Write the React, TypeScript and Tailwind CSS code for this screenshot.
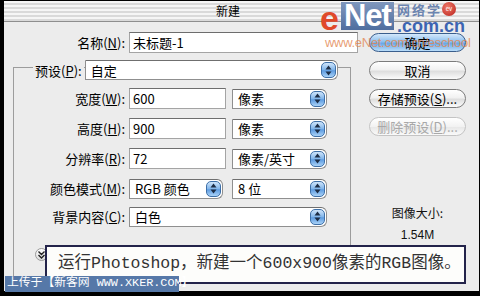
import React from 'react';

const ui = "font-['Noto_Sans_CJK_SC','Liberation_Sans',sans-serif]";

const Arrows = () => (
  <div className="w-[15px] h-[16px] rounded-[5px] border border-[#3d6fa8] bg-[linear-gradient(180deg,#cfe5fb_0%,#7fb4ea_50%,#5d9be0_55%,#a9d2f7_100%)] flex items-center justify-center">
    <svg width="7" height="11" viewBox="0 0 7 11">
      <path d="M3.5 0.5 L6.5 4.5 L0.5 4.5 Z" fill="#1d2d45" />
      <path d="M3.5 10.5 L6.5 6.5 L0.5 6.5 Z" fill="#1d2d45" />
    </svg>
  </div>
);

const Select = ({ value, w }: { value: string; w: string }) => (
  <div className={`${w} h-[20px] bg-white border border-[#8f8f8f] border-t-[#6f6f6f] rounded-r-[6px] flex items-center justify-between pl-[5px] pr-[1px]`}>
    <span className="text-[13px] leading-none text-black">{value}</span>
    <Arrows />
  </div>
);

const Input = ({ value, w }: { value: string; w: string }) => (
  <div className={`${w} h-[21px] bg-white border border-[#a4a4a4] border-t-[#6d6d6d] flex items-center pl-[3px] text-[13px] leading-none text-black`}>
    {value}
  </div>
);

const Label = ({ text, u }: { text: string; u: string }) => (
  <span className="text-[13px] leading-none text-black whitespace-nowrap">
    {text}(<span className="underline">{u}</span>):
  </span>
);

const Button = ({ label, primary, disabled }: { label: React.ReactNode; primary?: boolean; disabled?: boolean }) => (
  <div
    className={
      'w-[97px] h-[19px] rounded-full flex items-center justify-center text-[13px] leading-none border ' +
      (primary
        ? 'border-[#3a5e8c] bg-[linear-gradient(180deg,#d4e8fb_0%,#8ec0ee_45%,#6aa8e6_55%,#b9dcf9_100%)] text-black'
        : disabled
        ? 'border-[#c4c4c4] bg-[linear-gradient(180deg,#ffffff_0%,#f2f2f2_50%,#e8e8e8_55%,#fafafa_100%)] text-[#a8a8a8]'
        : 'border-[#7c7c7c] bg-[linear-gradient(180deg,#ffffff_0%,#f1f1f1_45%,#dedede_55%,#fbfbfb_100%)] text-black')
    }
  >
    {label}
  </div>
);

const Row = ({ children, mt }: { children: React.ReactNode; mt: string }) => (
  <div className={`flex items-center h-[21px] ${mt}`}>{children}</div>
);

const App = () => {
  return (
    <div className={`relative w-[480px] h-[296px] bg-black overflow-hidden pl-[4px] pt-[1px] pr-[1px] pb-[5px] text-[13px] leading-none ${ui}`}>
      <div className="w-full h-full bg-[#ececec] flex flex-col">
        {/* title bar */}
        <div className="h-[21px] shrink-0 border-b border-[#8e8e8e] bg-[repeating-linear-gradient(180deg,#f6f6f6_0px,#f6f6f6_2px,#dadada_2px,#dadada_4px)] flex items-center pl-[212px]">
          <span className="text-[12px] leading-none text-black">新建</span>
        </div>

        <div className="flex flex-1">
          {/* left column */}
          <div className="w-[356px] flex flex-col">
            <div className="flex items-center h-[21px] mt-[10px]">
              <div className="w-[121px] flex justify-end">
                <Label text="名称" u="N" />
              </div>
              <div className="ml-[4px]">
                <Input value="未标题-1" w="w-[229px]" />
              </div>
            </div>

            <div className="ml-[9px] mt-[14px] w-[338px] h-[216px] border border-[#9c9c9c] flex flex-col">
              <div className="flex items-center h-[20px] mt-[-8px]">
                <span className="ml-[19px] px-[2px] bg-[#ececec]">
                  <Label text="预设" u="P" />
                </span>
                <div className="ml-[1px]">
                  <Select value="自定" w="w-[253px]" />
                </div>
              </div>

              {[
                ['宽度', 'W', '600', '像素', 'mt-[8px]'],
                ['高度', 'H', '900', '像素', 'mt-[9px]'],
                ['分辨率', 'R', '72', '像素/英寸', 'mt-[9px]'],
              ].map(([t, u, v, unit, mt]) => (
                <Row key={t} mt={mt}>
                  <div className="w-[111px] flex justify-end">
                    <Label text={t} u={u} />
                  </div>
                  <div className="ml-[4px]">
                    <Input value={v} w="w-[97px]" />
                  </div>
                  <div className="ml-[6px]">
                    <Select value={unit} w="w-[95px]" />
                  </div>
                </Row>
              ))}

              <Row mt="mt-[9px]">
                <div className="w-[111px] flex justify-end">
                  <Label text="颜色模式" u="M" />
                </div>
                <div className="ml-[4px]">
                  <Select value="RGB 颜色" w="w-[94px]" />
                </div>
                <div className="ml-[9px]">
                  <Select value="8 位" w="w-[95px]" />
                </div>
              </Row>

              <Row mt="mt-[7px]">
                <div className="w-[111px] flex justify-end">
                  <Label text="背景内容" u="C" />
                </div>
                <div className="ml-[4px]">
                  <Select value="白色" w="w-[198px]" />
                </div>
              </Row>

              <div className="ml-[21px] mt-[21px] w-[13px] h-[13px] rounded-full border border-[#9a9a9a] bg-[linear-gradient(180deg,#ffffff,#dcdcdc)] flex items-center justify-center">
                <svg width="7" height="8" viewBox="0 0 7 8">
                  <path d="M0.5 0.5 L3.5 3.5 L6.5 0.5 M0.5 4 L3.5 7 L6.5 4" stroke="#222" strokeWidth="1.4" fill="none" />
                </svg>
              </div>
            </div>
          </div>

          {/* right column */}
          <div className="flex-1 flex flex-col items-center pt-[11px] pr-[4px]">
            <div className="flex flex-col gap-[9px]">
              <Button label="确定" primary />
              <Button label="取消" />
              <Button label={<span>存储预设(<span className="underline">S</span>)...</span>} />
              <Button label={<span>删除预设(<span className="underline">D</span>)...</span>} disabled />
            </div>
            <div className="mt-[71px] text-[12px] leading-none text-[#111]">图像大小:</div>
            <div className="mt-[10px] text-[12px] leading-none text-[#111] font-['Liberation_Sans',sans-serif]">1.54M</div>
          </div>
        </div>
      </div>

      {/* eNet logo watermark */}
      <div className="absolute left-[320px] top-[2px] flex items-start">
        <span className="mt-[2px] text-[34px] leading-[28px] font-bold text-[#e04a2a] font-['Liberation_Sans',sans-serif]">e</span>
        <span className="ml-[2px] h-[28px] px-[3px] bg-[linear-gradient(180deg,#7f97bd,#4f6e9f)] text-white text-[31px] leading-[28px] font-bold font-['Liberation_Sans',sans-serif] tracking-[-1px]">Net</span>
        <div className="ml-[3px] flex flex-col">
          <div className="flex items-center">
            <span className="text-[13px] leading-none text-[#6d85b0] font-bold tracking-[2px]">网络学</span>
            <span className="w-[14px] h-[14px] rounded-full bg-[radial-gradient(circle_at_40%_35%,#f07a6a,#b8201a)] text-white text-[6px] leading-[14px] text-center">ev</span>
          </div>
          <span className="mt-[1px] text-[18px] leading-none font-bold text-[#3c64b2] font-['Liberation_Sans',sans-serif] whitespace-nowrap">.com.cn</span>
        </div>
      </div>
      <div className="absolute left-[325px] top-[36px] text-[13px] leading-none text-[#e2854f]/80 font-['Liberation_Sans',sans-serif] tracking-[-0.3px]">
        www.eNet.com.cn/eschool
      </div>

      {/* caption */}
      <div className="absolute left-[45px] top-[245px] w-[421px] h-[39px] bg-[#fdfdfb] border-2 border-[#23234a] flex items-center pl-[11px]">
        <span className="text-[16.5px] leading-none text-[#333] font-['Liberation_Mono','Noto_Sans_CJK_SC',monospace] whitespace-nowrap">
          运行Photoshop，新建一个600x900像素的RGB图像。
        </span>
      </div>

      {/* upload watermark */}
      <div className="absolute left-[5px] top-[276px] w-[174px] h-[16px] bg-[#5678a8] flex items-center pl-[2px]">
        <span className="text-[11.8px] leading-none text-white font-['Liberation_Mono','Noto_Sans_CJK_SC',monospace] whitespace-nowrap">
          上传于【新客网 WWW.XKER.COM】
        </span>
      </div>
    </div>
  );
};

export default App;
